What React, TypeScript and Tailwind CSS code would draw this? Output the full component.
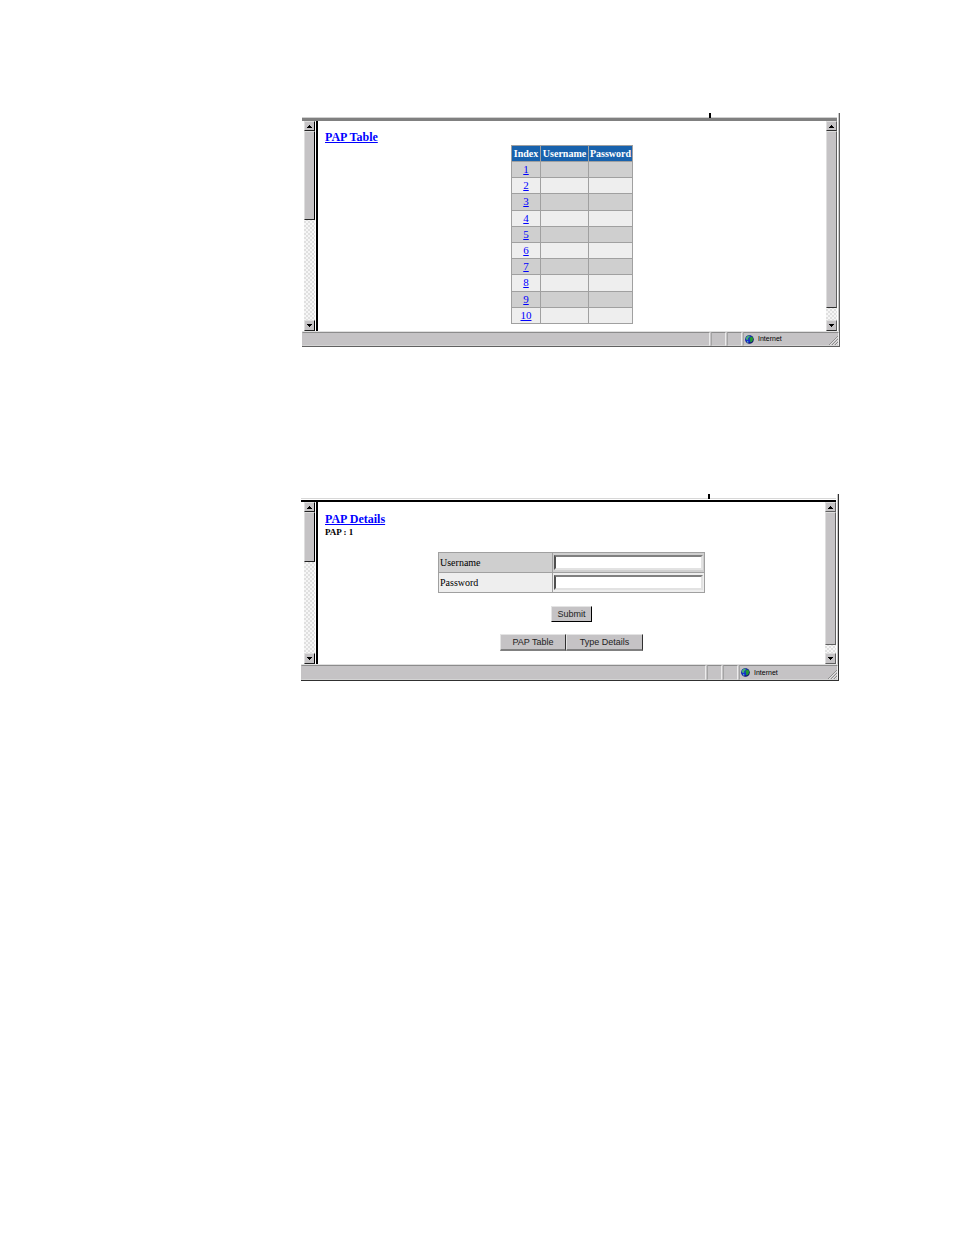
import React from 'react';
import { clsx } from 'clsx';

const rows = [1, 2, 3, 4, 5, 6, 7, 8, 9, 10];

const Arrow: React.FC<{ down?: boolean }> = ({ down }) => (
  <svg viewBox="0 0 5 3" className="w-[5px] h-[3px]" shapeRendering="crispEdges" aria-hidden="true">
    {down ? <path d="M0 0h5v1H0zM1 1h3v1H1zM2 2h1v1H2z" /> : <path d="M2 0h1v1H2zM1 1h3v1H1zM0 2h5v1H0z" />}
  </svg>
);

type ScrollBarProps = { thumb: string; edge: string };

const ScrollBar: React.FC<ScrollBarProps> = ({ thumb, edge }) => {
  const face = clsx('bg-[#c5c3c5] border-l border-t border-l-[#dedede] border-t-[#dedede] border-r border-b shrink-0', edge);
  return (
    <div className="w-[11px] shrink-0 flex flex-col bg-[#e0e0e0] bg-[conic-gradient(#f6f6f6_25%,transparent_25%_50%,#f6f6f6_50%_75%,transparent_75%)] bg-[length:4px_4px]">
      <button type="button" aria-label="Scroll up" className={clsx(face, 'h-[10px] flex items-center justify-center')}>
        <Arrow />
      </button>
      <div className={clsx(face, thumb)} />
      <button type="button" aria-label="Scroll down" className={clsx(face, 'h-[11px] mt-auto flex items-center justify-center')}>
        <Arrow down />
      </button>
    </div>
  );
};

const Globe = () => (
  <svg viewBox="0 0 9 9" className="w-[9px] h-[9px] shrink-0" aria-hidden="true">
    <circle cx="4.5" cy="4.5" r="4.3" fill="#101070" />
    <circle cx="4" cy="4" r="3.6" fill="#1530d0" />
    <path d="M1 2.5 3 .6l2 .2-.6 1.4L3 3.2l.4 1.3L2 5 .6 4z" fill="#48b070" />
    <path d="M5.2 2.2 7 1.6l1.2 2L7.6 6 6 7.6 5 6.8l.3-1.6-.9-1.4z" fill="#229a30" />
    <path d="M2 5.8l1.4.6L3.2 8 2 7.2z" fill="#58b8c8" />
  </svg>
);

const Grip = () => (
  <svg viewBox="0 0 9 9" className="w-[9px] h-[9px] ml-auto self-end" aria-hidden="true">
    <path d="M0 9 9 0M3 9l6-6M6 9l3-3" stroke="#8c8c8c" />
    <path d="M1 9 9 1M4 9l5-5M7 9l2-2" stroke="#efefef" strokeWidth=".7" />
  </svg>
);

type StatusBarProps = { height: string; zone: string };

const StatusBar: React.FC<StatusBarProps> = ({ height, zone }) => {
  const pane = 'border border-t-[#8c8c8c] border-l-[#a4a4a4] border-r-[#ececec] border-b-[#d4d4d4]';
  return (
    <div className={clsx('bg-[#c5c3c5] border-t border-[#e0e0e0] flex gap-px', height)}>
      <div className={clsx(pane, 'flex-1 border-l-[#c5c3c5]')} />
      <div className={clsx(pane, 'w-[15px]')} />
      <div className={clsx(pane, 'w-[15px]')} />
      <div className={clsx(pane, 'flex items-center pl-px gap-1', zone)}>
        <Globe />
        <span className='font-["Liberation_Sans",sans-serif] text-[7px] leading-[10px]'>Internet</span>
        <Grip />
      </div>
    </div>
  );
};

type FrameProps = StatusBarProps & {
  children: React.ReactNode;
  className: string;
  topEdge: string;
  leftPad: string;
  leftThumb: string;
  rightThumb: string;
  edge: string;
  outer: string;
};

const BrowserFrame: React.FC<FrameProps> = ({
  children, className, topEdge, leftPad, leftThumb, rightThumb, edge, outer, height, zone
}) => (
  <section className={clsx('border-r border-b', outer, className)}>
    <div className="border-r border-[#c8c8c8] pr-px">
      <div className="h-1 flex justify-end pr-[126px]">
        <div className="w-[2px] h-[5px] bg-black" />
      </div>
      <div className={topEdge} />
      <div className="flex">
        <div className={clsx('flex border-r-2 border-black pr-px', leftPad)}>
          <ScrollBar thumb={leftThumb} edge="border-r-black border-b-[#222]" />
        </div>
        <div className="flex-1 min-w-0">{children}</div>
        <ScrollBar thumb={rightThumb} edge={edge} />
      </div>
    </div>
    <StatusBar height={height} zone={zone} />
  </section>
);

const PapTable = () => (
  <div className="pt-2 pb-[7px]">
    <h2 className="pl-[7px] text-[12px] leading-[16px] font-bold">
      <a href="#pap-table" className="text-[#0000ff] underline">PAP Table</a>
    </h2>
    <table className="mx-auto h-[179px] border-collapse table-fixed w-[122px] text-center border border-[#a0a0a0]">
      <thead>
        <tr className="bg-[#1862ad] text-white text-[10px] leading-[15px]">
          <th className="w-[29px] p-0 border border-[#a0a0a0]">Index</th>
          <th className="w-[48px] p-0 border border-[#a0a0a0]">Username</th>
          <th className="p-0 border border-[#a0a0a0]">Password</th>
        </tr>
      </thead>
      <tbody className="text-[11px] leading-[15px]">
        {rows.map((n) => (
          <tr key={n} className="odd:bg-[#cfcfcf] even:bg-[#eeeeee]">
            <td className="p-0 border border-[#a0a0a0]">
              <a href={`#pap-${n}`} className="text-[#0000ff] underline">{n}</a>
            </td>
            <td className="p-0 border border-[#a0a0a0]"></td>
            <td className="p-0 border border-[#a0a0a0]"></td>
          </tr>
        ))}
      </tbody>
    </table>
  </div>
);

const fields = [
  { id: 'username', label: 'Username', type: 'text' },
  { id: 'password', label: 'Password', type: 'password' }
];

const PapDetails = () => {
  const button = 'bg-[#c5c3c5] text-[#222] font-["Liberation_Sans",sans-serif] text-[9px] leading-[14px] border-t border-l border-t-[#e4e4e4] border-l-[#e4e4e4]';
  return (
    <form className="pt-[9px] pb-[13px]" onSubmit={(e) => e.preventDefault()}>
      <h2 className="pl-[7px] text-[12px] leading-[16px] font-bold">
        <a href="#pap-details" className="text-[#0000ff] underline">PAP Details</a>
      </h2>
      <p className="pl-[7px] text-[9px] leading-[11px] font-bold">PAP : 1</p>
      <table className="mt-[14px] mx-auto border-collapse table-fixed w-[267px] text-[10px]">
        <tbody>
          {fields.map((f) => (
            <tr key={f.id} className="h-5 odd:bg-[#cfcfcf] even:bg-[#eeeeee]">
              <td className="w-[114px] p-0 pl-px border border-[#a0a0a0]">
                <label htmlFor={f.id}>{f.label}</label>
              </td>
              <td className="p-0 px-px border border-[#a0a0a0]">
                <input
                  id={f.id}
                  type={f.type}
                  className="block w-[149px] h-[15px] px-1 bg-white border-2 border-t-[#808080] border-l-[#505050] border-r-[#e2e2e2] border-b-[#e2e2e2] outline-none"
                />
              </td>
            </tr>
          ))}
        </tbody>
      </table>
      <div className="mt-[13px] flex justify-center">
        <button type="submit" className={clsx(button, 'w-[41px] h-4 border-r border-b border-r-black border-b-black')}>Submit</button>
      </div>
      <div className="mt-3 flex justify-center">
        <button type="button" className={clsx(button, 'w-[66px] h-[17px] border-r border-b-2 border-r-[#303030] border-b-[#808080]')}>PAP Table</button>
        <button type="button" className={clsx(button, 'w-[77px] h-[17px] border-r border-b-2 border-r-[#303030] border-b-[#808080]')}>Type Details</button>
      </div>
    </form>
  );
};

export default function App() {
  return (
    <main className='min-h-screen bg-white text-black pt-[113px] font-["Liberation_Serif",serif]'>
      <BrowserFrame
        className="ml-[302px] mr-[114px]"
        outer="border-[#606060]"
        topEdge="h-1 bg-[#808080] border-t border-[#d0d0d0]"
        leftPad="pl-[2px]"
        leftThumb="h-[89px]"
        rightThumb="h-[177px]"
        edge="border-r-[#606060] border-b-[#303030]"
        height="h-[15px]"
        zone="w-[96px]"
      >
        <PapTable />
      </BrowserFrame>
      <BrowserFrame
        className="mt-[147px] ml-[301px] mr-[115px]"
        outer="border-[#303030]"
        topEdge="h-1 bg-white border-t border-t-[#d8d8d8] border-b-2 border-b-black"
        leftPad="pl-[3px]"
        leftThumb="h-[50px]"
        rightThumb="h-[133px]"
        edge="border-r-[#606060] border-b-[#606060]"
        height="h-[16px]"
        zone="w-[99px]"
      >
        <PapDetails />
      </BrowserFrame>
    </main>
  );
}
